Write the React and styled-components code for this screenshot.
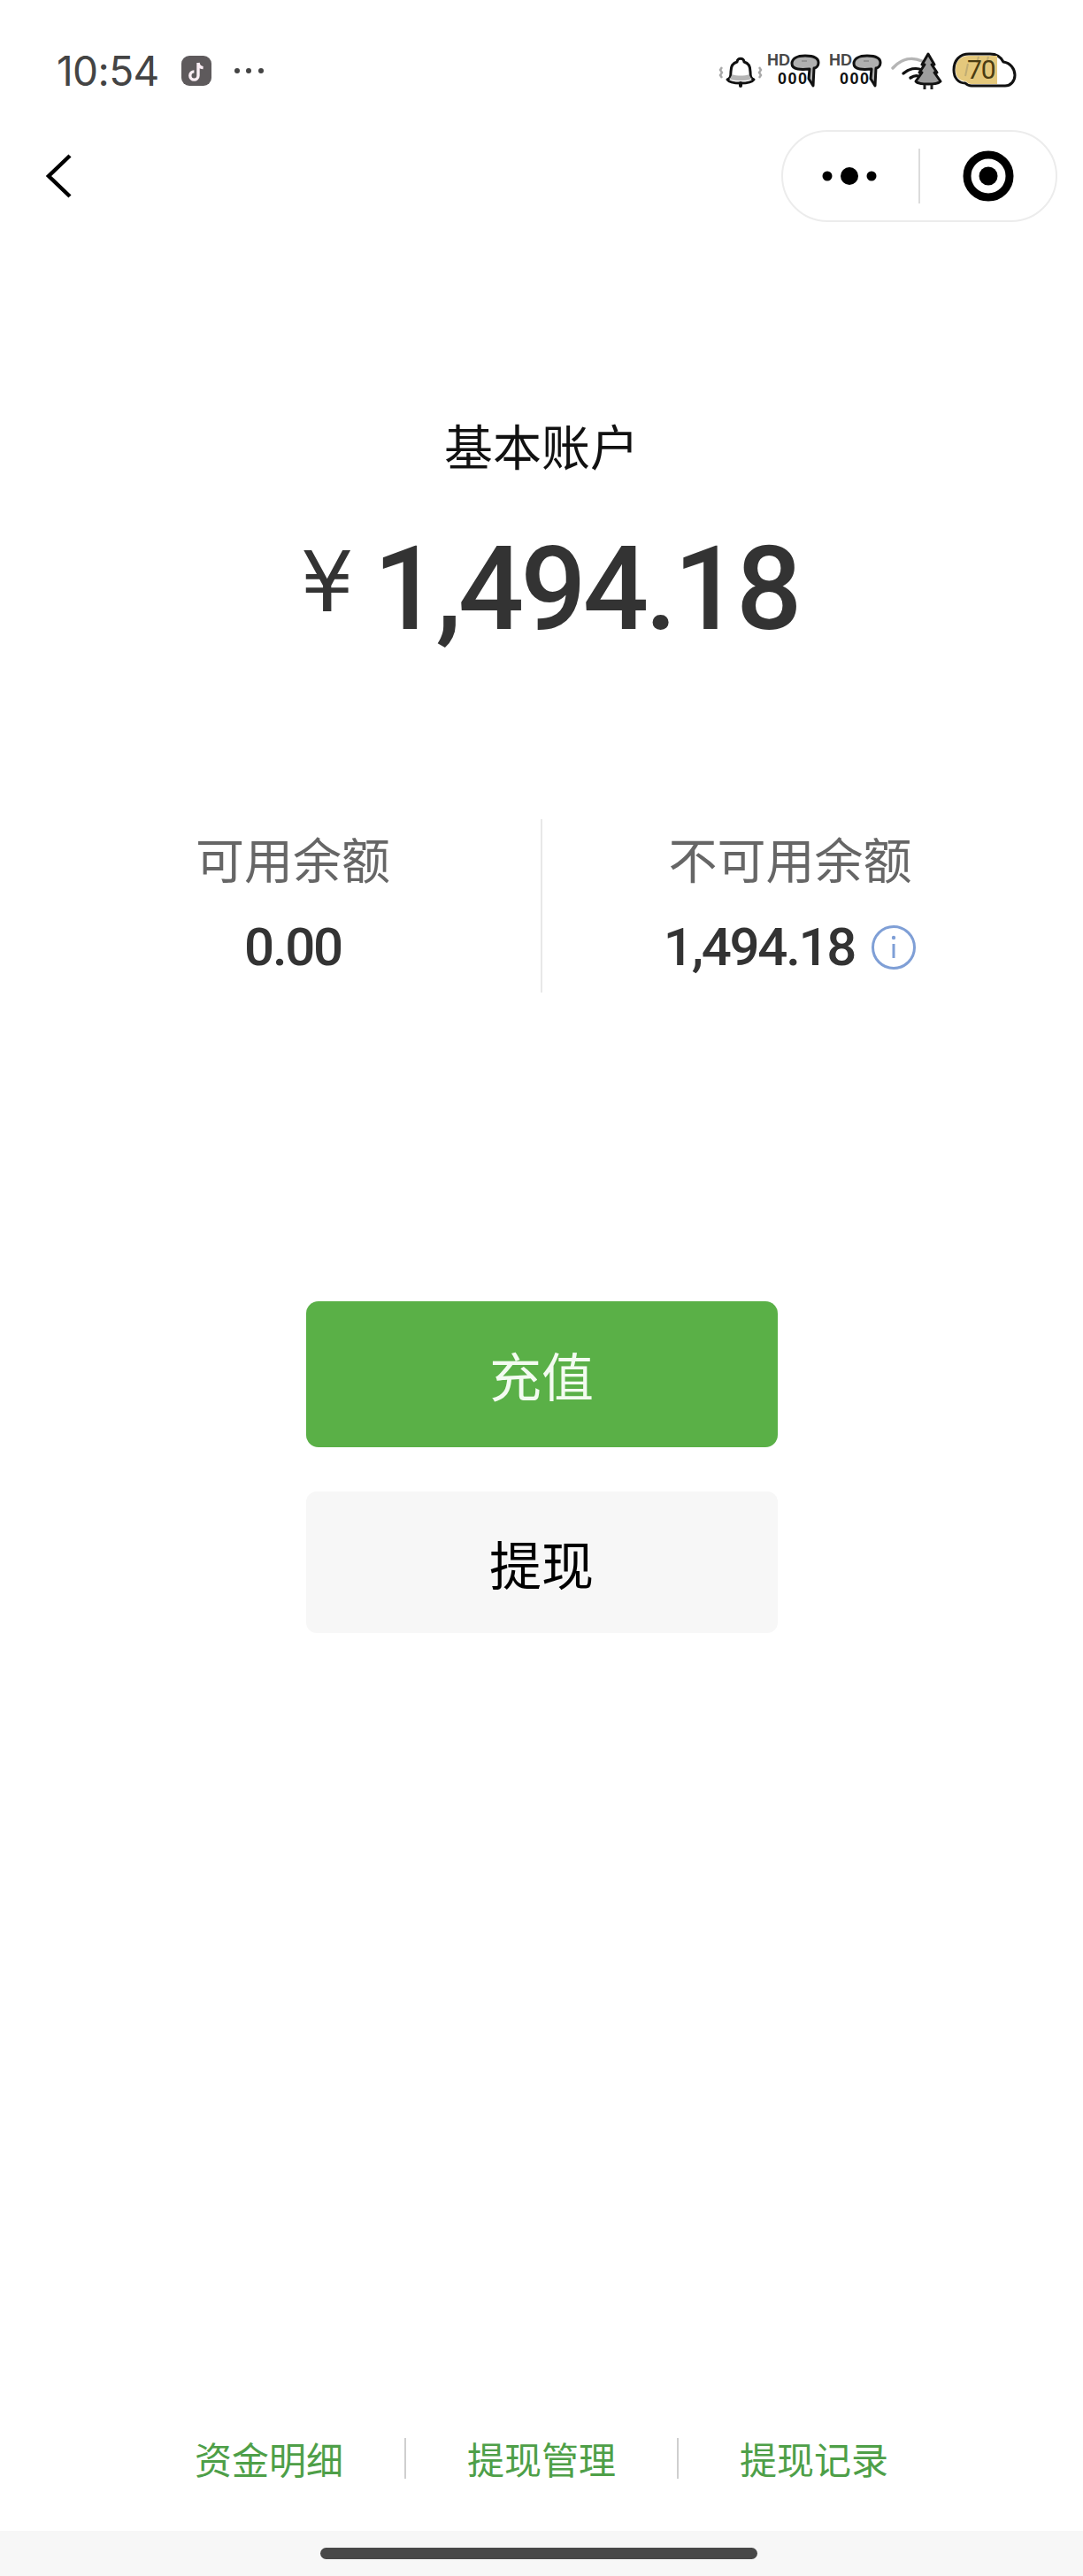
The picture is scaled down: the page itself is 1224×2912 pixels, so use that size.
import styled, { createGlobalStyle } from 'styled-components';

const Global = createGlobalStyle`
  html, body { margin: 0; padding: 0; background: #fff; }
  body { font-family: "Noto Sans CJK SC", "Roboto", sans-serif; }
`;

const Page = styled.div`
  width: 1224px;
  height: 2912px;
  display: flex;
  flex-direction: column;
  overflow: hidden;
  background: #fff;
`;

const StatusBar = styled.div`
  height: 60px;
  margin-top: 50px;
  padding: 0 72px 0 64px;
  display: flex;
  align-items: center;
  justify-content: space-between;
`;
const StatusLeft = styled.div`display: flex; align-items: center;`;
const Time = styled.span`
  font-family: Inter, Roboto, sans-serif;
  font-size: 46px;
  color: #444;
  letter-spacing: -0.6px;
  line-height: 60px;
`;
const AppBadge = styled.svg`margin-left: 24px; width: 36px; height: 36px;`;
const MoreDots = styled.svg`margin-left: 24px; width: 36px; height: 10px;`;
const StatusIcons = styled.svg`width: 344px; height: 60px;`;

const NavBar = styled.div`
  height: 104px;
  margin-top: 37px;
  padding: 0 29px 0 50px;
  display: flex;
  align-items: center;
  justify-content: space-between;
`;
const BackIcon = styled.svg`width: 32px; height: 52px;`;
const Capsule = styled.div`
  width: 312px;
  height: 104px;
  box-sizing: border-box;
  border: 2px solid #ececec;
  border-radius: 52px;
  display: flex;
  align-items: center;
`;
const CapsuleSide = styled.div`
  flex: 1;
  display: flex;
  justify-content: center;
  align-items: center;
`;
const CapsuleRule = styled.div`width: 2px; height: 62px; background: #dcdcdc;`;

const Account = styled.section`
  margin-top: 221px;
  display: flex;
  flex-direction: column;
  align-items: center;
`;
const AccountName = styled.div`
  font-size: 55px;
  line-height: 60px;
  color: #111;
`;
const Amount = styled.div`
  margin: 64px 0 0 18px;
  height: 140px;
  white-space: nowrap;
  color: #333;
  font-family: Roboto, sans-serif;
`;
const Currency = styled.span`
  font-family: "DejaVu Sans", sans-serif;
  font-size: 95px;
  line-height: 96px;
  vertical-align: 20px;
  margin-right: 22px;
`;
const AmountValue = styled.span`
  font-size: 131px;
  line-height: 140px;
  font-weight: 500;
  letter-spacing: -4px;
`;

const Balances = styled.section`
  margin-top: 190px;
  height: 196px;
  display: flex;
  justify-content: center;
`;
const BalanceCol = styled.div`
  width: 560px;
  display: flex;
  flex-direction: column;
  align-items: center;
  padding-top: 13px;
`;
const BalanceRule = styled.div`width: 2px; background: #e8e8e8;`;
const BalanceLabel = styled.div`
  font-size: 55px;
  line-height: 60px;
  color: #666;
`;
const BalanceValue = styled.div`
  margin-top: 42px;
  display: flex;
  align-items: center;
  gap: 18px;
  font-family: Roboto, sans-serif;
  font-size: 60px;
  line-height: 60px;
  font-weight: 500;
  letter-spacing: -2.3px;
  color: #333;
`;
const InfoIcon = styled.svg`width: 52px; height: 52px;`;

const Actions = styled.section`
  margin-top: 349px;
  display: flex;
  flex-direction: column;
  align-items: center;
  gap: 50px;
`;
const ActionButton = styled.button`
  width: 533px;
  height: ${p => (p.$primary ? 165 : 160)}px;
  border: 0;
  border-radius: ${p => (p.$primary ? 14 : 12)}px;
  background: ${p => (p.$primary ? '#5ab047' : '#f7f7f7')};
  color: ${p => (p.$primary ? '#f3fbf0' : '#000')};
  font-family: inherit;
  font-size: 59px;
  padding: 0;
`;

const Footer = styled.footer`margin-top: auto;`;
const Links = styled.nav`
  display: flex;
  justify-content: center;
  align-items: center;
  height: 46px;
  margin-bottom: 59px;
`;
const LinkItem = styled.a`
  width: 306px;
  text-align: center;
  font-size: 42px;
  line-height: 46px;
  color: #4e9f48;
  & + & { border-left: 2px solid #cfcfcf; }
`;
const HomeBar = styled.div`
  height: 51px;
  background: #f7f7f7;
  display: flex;
  justify-content: center;
  align-items: flex-start;
`;
const HomeIndicator = styled.div`
  margin: 19px 6px 0 0;
  width: 494px;
  height: 13px;
  border-radius: 7px;
  background: #484848;
`;

const hdFont = '"Liberation Sans", sans-serif';

function SignalGroup({ x }) {
  return (
    <g transform={`translate(${x} 0)`}>
      <text x="59" y="24" fontFamily={hdFont} fontWeight="700" fontSize="18" fill="#484848">HD</text>
      <text x="71" y="45" fontFamily={hdFont} fontWeight="700" fontSize="18" letterSpacing="1.500" fill="#111">000</text>
      <path d="M87 22c0-6 6-9 15-9s15 2 15 8c0 4-3 6-5 6l-1 20-5-8 1-11c-9 1-20 1-20-6z" fill="#b0b0b0" stroke="#111" strokeWidth="3" strokeLinejoin="round" />
      <path d="M98 19h6" stroke="#888" strokeWidth="1.500" />
    </g>
  );
}

export default function App() {
  return (
    <Page>
      <Global />
      <StatusBar>
        <StatusLeft>
          <Time>10:54</Time>
          <AppBadge viewBox="0 0 36 36">
            <rect x="1" y="1" width="34" height="34" rx="9" fill="#5e5a5c" />
            <path d="M20 9v14.500a4.600 4.600 0 1 1-4.600-4.600M20 9c.4 3.400 2.500 5.400 5.600 5.600" fill="none" stroke="#fbeef5" strokeWidth="3.400" />
          </AppBadge>
          <MoreDots viewBox="0 0 36 10">
            <circle cx="4" cy="5" r="3" fill="#444" />
            <circle cx="17" cy="5" r="3" fill="#444" />
            <circle cx="31" cy="5" r="3" fill="#444" />
          </MoreDots>
        </StatusLeft>
        <StatusIcons viewBox="0 0 344 60">
          {/* bell */}
          <path d="M14 40c3-1 4-3 4-9 0-7 3-10 7-11 0-5 8-5 8 0 4 1 7 4 7 11 0 6 1 8 4 9-2 3-7 4-15 4s-13-1-15-4z" fill="#fff" stroke="#111" strokeWidth="3" strokeLinejoin="round" />
          <path d="M16 39c2-1 3-3 3-5 6 2 14 2 20 0 0 2 1 4 3 5-6 3-20 3-26 0z" fill="#b5b5b5" />
          <path d="M29 44v3" stroke="#111" strokeWidth="4" strokeLinecap="round" />
          <path d="M8 26l-2 3 2 3-2 3 2 3M50 26l2 3-2 3 2 3-2 3" fill="none" stroke="#a8a8a8" strokeWidth="2.400" />
          <SignalGroup x={0} />
          <SignalGroup x={70} />
          {/* wifi and tree */}
          <g fill="none" strokeWidth="3.400" strokeLinecap="round">
            <path d="M201 27c10-11 22-13 33-8" stroke="#b5b5b5" />
            <path d="M213 33c6-5 14-7 21-4" stroke="#111" />
            <path d="M221 38c3-2 6-3 9-2" stroke="#111" />
          </g>
          <circle cx="229" cy="42" r="2.600" fill="#111" />
          <path d="M241 11l7 12h-3l6 9h-3l7 10c-3 3-8 3-14 3s-11 0-14-3l7-10h-3l6-9h-3z" fill="#9d9d9d" stroke="#111" strokeWidth="3" strokeLinejoin="round" />
          <path d="M237 46v5M245 46v5" stroke="#222" strokeWidth="3" />
          {/* weather cloud with temperature */}
          <path d="M290 47c-3 0-5-1-7-3-8 0-13-6-13-15 0-11 7-18 17-18h24c8 0 12 3 15 9 8 1 13 8 13 15 0 7-5 12-11 12z" fill="#fff" stroke="#111" strokeWidth="3" strokeLinejoin="round" />
          <path d="M290 45c-3 0-5-1-6-3-7 0-12-5-12-13 0-10 6-16 15-16h32v32z" fill="#e4c87c" />
          <path d="M298 14l-2 7M309 14l-2 7M286 22l-3 14" stroke="#a89a70" strokeWidth="2" opacity=".6" />
          <text x="285" y="39" fontFamily={'Roboto, sans-serif'} fontSize="30" letterSpacing="-1" fill="#4a3c12">70</text>
        </StatusIcons>
      </StatusBar>

      <NavBar>
        <BackIcon viewBox="0 0 32 52">
          <path d="M29 3L5 26l24 23" fill="none" stroke="#000" strokeWidth="4.500" />
        </BackIcon>
        <Capsule>
          <CapsuleSide>
            <svg width="72" height="24" viewBox="0 0 72 24">
              <circle cx="9" cy="12" r="5.500" />
              <circle cx="34" cy="12" r="10" />
              <circle cx="59" cy="12" r="5.500" />
            </svg>
          </CapsuleSide>
          <CapsuleRule />
          <CapsuleSide>
            <svg width="60" height="60" viewBox="0 0 60 60">
              <circle cx="30" cy="30" r="24" fill="none" stroke="#000" strokeWidth="9" />
              <circle cx="30" cy="30" r="10.500" />
            </svg>
          </CapsuleSide>
        </Capsule>
      </NavBar>

      <Account>
        <AccountName>基本账户</AccountName>
        <Amount>
          <Currency>¥</Currency>
          <AmountValue>1,494.18</AmountValue>
        </Amount>
      </Account>

      <Balances>
        <BalanceCol>
          <BalanceLabel>可用余额</BalanceLabel>
          <BalanceValue>0.00</BalanceValue>
        </BalanceCol>
        <BalanceRule />
        <BalanceCol>
          <BalanceLabel>不可用余额</BalanceLabel>
          <BalanceValue>
            1,494.18
            <InfoIcon viewBox="0 0 52 52">
              <circle cx="26" cy="26" r="23.500" fill="none" stroke="#7f9fd6" strokeWidth="3" />
              <circle cx="26" cy="15" r="2.200" fill="#7f9fd6" />
              <path d="M26 22v16" stroke="#7f9fd6" strokeWidth="3" />
            </InfoIcon>
          </BalanceValue>
        </BalanceCol>
      </Balances>

      <Actions>
        <ActionButton $primary>充值</ActionButton>
        <ActionButton>提现</ActionButton>
      </Actions>

      <Footer>
        <Links>
          <LinkItem>资金明细</LinkItem>
          <LinkItem>提现管理</LinkItem>
          <LinkItem>提现记录</LinkItem>
        </Links>
        <HomeBar>
          <HomeIndicator />
        </HomeBar>
      </Footer>
    </Page>
  );
}
